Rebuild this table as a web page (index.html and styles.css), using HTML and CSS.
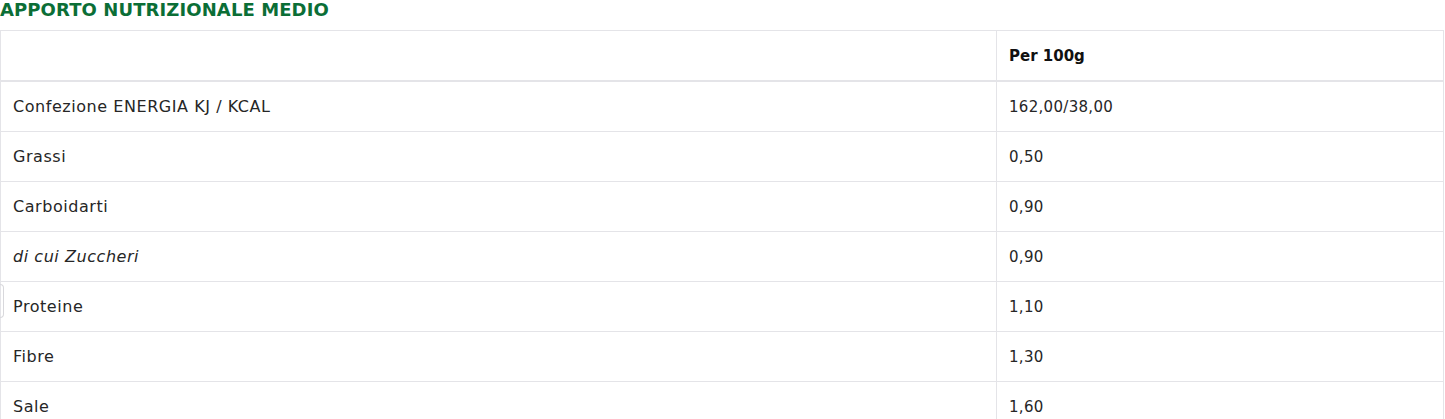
FILE: index.html
```html
<!DOCTYPE html>
<html lang="it">
<head>
<meta charset="utf-8">
<title>Apporto nutrizionale medio</title>
<link rel="stylesheet" href="styles.css">
</head>
<body>
<section class="nutri">
  <h2 class="nutri-title">APPORTO NUTRIZIONALE MEDIO</h2>
  <table class="nutri-table">
    <thead>
      <tr><th class="col-name"></th><th class="col-val">Per 100g</th></tr>
    </thead>
    <tbody>
      <tr><td class="name">Confezione ENERGIA KJ / KCAL</td><td class="val">162,00/38,00</td></tr>
      <tr><td class="name">Grassi</td><td class="val">0,50</td></tr>
      <tr><td class="name">Carboidarti</td><td class="val">0,90</td></tr>
      <tr><td class="name"><em>di cui Zuccheri</em></td><td class="val">0,90</td></tr>
      <tr><td class="name has-tab"><span class="side-tab"></span>Proteine</td><td class="val">1,10</td></tr>
      <tr><td class="name">Fibre</td><td class="val">1,30</td></tr>
      <tr><td class="name">Sale</td><td class="val">1,60</td></tr>
    </tbody>
  </table>
</section>
</body>
</html>
```
FILE: styles.css
```css
html, body {
  margin: 0;
  padding: 0;
  background: #ffffff;
}
body {
  font-family: "DejaVu Sans", "Liberation Sans", sans-serif;
  color: #222222;
}
.nutri {
  width: 1445px;
}
.nutri-title {
  margin: 0;
  height: 30px;
  font-size: 18px;
  line-height: 20px;
  font-weight: 700;
  color: #0b6e36;
  letter-spacing: 0.1px;
}
.nutri-table {
  width: 1444px;
  border-collapse: collapse;
  border: 1px solid #e4e4e8;
  table-layout: fixed;
}
.nutri-table th,
.nutri-table td {
  border: 1px solid #e4e4e8;
  padding: 0 12px;
  height: 49px;
  text-align: left;
  vertical-align: middle;
  line-height: 18px;
}
.nutri-table th {
  font-size: 15px;
  font-weight: 700;
  color: #111111;
  border-bottom: 2px solid #e4e4e8;
}
.nutri-table td.name {
  font-size: 16px;
  letter-spacing: 0.55px;
  color: #262626;
}
.nutri-table td.val {
  font-size: 15px;
  letter-spacing: 0.3px;
  color: #262626;
}
.col-name {
  width: 971px;
}
.nutri-table em {
  font-style: italic;
}
.has-tab {
  position: relative;
}
.side-tab {
  position: absolute;
  left: -1px;
  top: 2px;
  width: 3px;
  height: 32px;
  border: 1px solid #d8d8dc;
  border-left: none;
  border-radius: 0 4px 4px 0;
}
```
